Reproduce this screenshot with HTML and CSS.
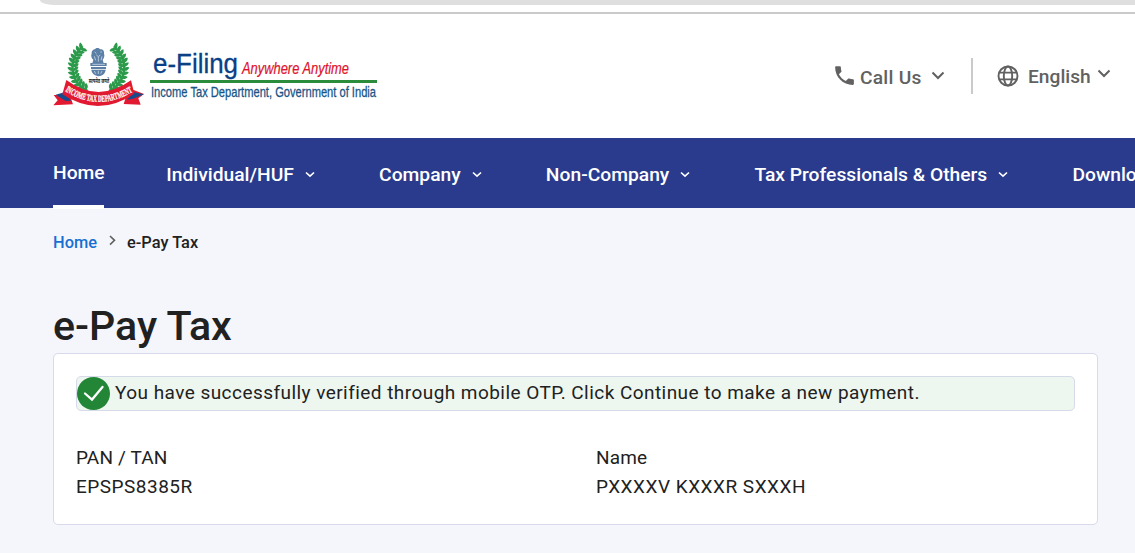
FILE: index.html
```html
<!DOCTYPE html>
<html lang="en">
<head>
    <meta charset="UTF-8">
    <meta name="viewport" content="width=device-width, initial-scale=1.0">
    <title>e-Pay Tax</title>
    <link rel="stylesheet" href="styles.css">
</head>
<body>
    <div class="top-strip"><div class="address-bar"></div></div>

    <header class="header">
        <svg class="logo" width="345" height="80" viewBox="0 0 345 80" role="img" aria-label="e-Filing">
            <defs>
                <g id="leaves">
                    <path d="M160 18c-11-2-13-11-11-18 10 2 13 10 11 18z"/>
                    <path d="M160 14c-11 6-12 12-9 19 10-3 13-11 9-19z"/>
                    <path d="M167 15c-4-7-12-6-17 0 5 7 13 6 17 0z"/>
                </g>
                <g id="branch">
                    <use href="#leaves" transform="rotate(43 160 92)"/>
                    <use href="#leaves" transform="rotate(52 160 92)"/>
                    <use href="#leaves" transform="rotate(61 160 92)"/>
                    <use href="#leaves" transform="rotate(70 160 92)"/>
                    <use href="#leaves" transform="rotate(79 160 92)"/>
                    <use href="#leaves" transform="rotate(88 160 92)"/>
                    <use href="#leaves" transform="rotate(97 160 92)"/>
                    <use href="#leaves" transform="rotate(106 160 92)"/>
                    <use href="#leaves" transform="rotate(115 160 92)"/>
                    <use href="#leaves" transform="rotate(124 160 92)"/>
                    <use href="#leaves" transform="rotate(133 160 92)"/>
                    <use href="#leaves" transform="rotate(142 160 92)"/>
                    <use href="#leaves" transform="rotate(151 160 92)"/>
                </g>
                <path id="ribbon-line" d="M58 167Q160 233 266 169"/>
            </defs>
            <g transform="scale(.33333)">
                <g fill="#2c9a4b" transform="translate(0 5)">
                    <use href="#branch"/>
                    <use href="#branch" transform="translate(320 0) scale(-1 1)"/>
                </g>
                <!-- lion capital -->
                <g fill="#5c7fa6">
                    <path d="M140 56c-1-8 5-13 10-13 2-5 12-6 15 0 8-1 14 5 12 13 3 6 0 13-4 18l3 11h-34l3-11c-6-5-8-12-5-18z"/>
                    <path d="M136 84h49v9h-49zM138 96h45v6h-45z"/>
                    <path d="M139 104h43c-1 11-9 18-21 20-12-2-21-9-22-20z"/>
                </g>
                <g fill="none" stroke="#e4edf5" stroke-width="2">
                    <path d="M149 51l5 4m12-4l5 0M154 60l6 5 6-5M148 64l4 12m8-10v14m11-16l-3 12M142 88h38M148 108l4 8m8-9v10m11-9l-4 8"/>
                </g>
                <text class="motto" x="131" y="144" textLength="62" lengthAdjust="spacingAndGlyphs">सत्यमेव जयते</text>
                <path fill="#e11931" d="M26 180L74 180L84 208L25 211L38 196zM252 160L297 177L280 190L287 209L236 207z"/>
                <path fill="#174b8c" d="M32 179L58 172L78 197L62 198zM246 194L266 172L297 178L264 191z"/>
                <path fill="#e11931" d="M64 135Q160 206 258 136L268 176Q160 249 52 178z"/>
                <text class="ribbon-text"><textPath href="#ribbon-line" startOffset="2" textLength="216" lengthAdjust="spacingAndGlyphs">INCOME TAX DEPARTMENT</textPath></text>
            </g>
            <text class="brand" x="108" y="38" textLength="85" lengthAdjust="spacingAndGlyphs">e-Filing</text>
            <text class="tagline" x="197" y="39" textLength="107" lengthAdjust="spacingAndGlyphs">Anywhere Anytime</text>
            <rect x="105" y="45" width="227" height="3" fill="#2b8d3c"/>
            <text class="department" x="106" y="62" textLength="225" lengthAdjust="spacingAndGlyphs">Income Tax Department, Government of India</text>
        </svg>

        <div class="header-tools">
            <div class="tool call">
                <svg class="phone" width="25" height="25" viewBox="0 0 24 24"><path fill="#616161" d="M6.62 10.79c1.44 2.83 3.76 5.14 6.59 6.59l2.2-2.2c.27-.27.67-.36 1.02-.24 1.12.37 2.33.57 3.57.57.55 0 1 .45 1 1V20c0 .55-.45 1-1 1-9.39 0-17-7.61-17-17 0-.55.45-1 1-1h3.5c.55 0 1 .45 1 1 0 1.25.2 2.45.57 3.57.11.35.03.74-.25 1.02l-2.2 2.2z"/></svg>
                <span>Call Us</span>
                <svg class="chevron" width="14" height="9" viewBox="0 0 14 9"><path d="M1.5 1.5L7 7l5.5-5.5"/></svg>
            </div>
            <div class="tool language">
                <svg class="globe" width="22" height="22" viewBox="0 0 22 22"><g fill="none" stroke="#616161" stroke-width="1.9"><circle cx="11" cy="11" r="9.5"/><ellipse cx="11" cy="11" rx="4.2" ry="9.5"/><path d="M2.2 7.6h17.6M2.2 14.4h17.6"/></g></svg>
                <span>English</span>
                <svg class="chevron" width="14" height="9" viewBox="0 0 14 9"><path d="M1.5 1.5L7 7l5.5-5.5"/></svg>
            </div>
        </div>
    </header>

    <nav class="nav">
        <a class="nav-item active">Home</a>
        <a class="nav-item">Individual/HUF <svg width="10" height="7" viewBox="0 0 10 7"><path d="M1 1.5l4 3.7 4-3.7"/></svg></a>
        <a class="nav-item">Company <svg width="10" height="7" viewBox="0 0 10 7"><path d="M1 1.5l4 3.7 4-3.7"/></svg></a>
        <a class="nav-item">Non-Company <svg width="10" height="7" viewBox="0 0 10 7"><path d="M1 1.5l4 3.7 4-3.7"/></svg></a>
        <a class="nav-item">Tax Professionals &amp; Others <svg width="10" height="7" viewBox="0 0 10 7"><path d="M1 1.5l4 3.7 4-3.7"/></svg></a>
        <a class="nav-item">Downloads</a>
    </nav>

    <main class="content">
        <div class="breadcrumb">
            <a>Home</a>
            <svg width="7" height="11" viewBox="0 0 7 11"><path d="M1 1l4.5 4.3L1 9.6"/></svg>
            <span>e-Pay Tax</span>
        </div>
        <h1>e-Pay Tax</h1>
        <section class="card">
            <div class="alert">
                <svg width="33" height="33" viewBox="0 0 33 33"><circle cx="16.5" cy="16.5" r="16.5" fill="#238636"/><path d="M8 16.5l7 6L25.500 10" fill="none" stroke="#fff" stroke-width="2.3" stroke-linecap="round"/></svg>
                <span>You have successfully verified through mobile OTP. Click Continue to make a new payment.</span>
            </div>
            <div class="details">
                <div>
                    <div class="label">PAN / TAN</div>
                    <div>EPSPS8385R</div>
                </div>
                <div>
                    <div class="label">Name</div>
                    <div>PXXXXV KXXXR SXXXH</div>
                </div>
            </div>
        </section>
    </main>
</body>
</html>
```
FILE: styles.css
```css
* {
    box-sizing: border-box;
}
body {
    margin: 0;
    height: 553px;
    overflow: hidden;
    font-family: Roboto, sans-serif;
    color: #212121;
    background-color: #f5f6fb;
}
.top-strip {
    height: 14px;
    padding-left: 40px;
    background: white;
    border-bottom: 2px solid #cacaca;
}
.address-bar {
    height: 5px;
    background: #dfdfdf;
    border-bottom-left-radius: 14px 5px;
}
.header {
    display: flex;
    justify-content: space-between;
    height: 124px;
    padding: 21px 24px 0 45px;
    background: white;
}
.logo {
    overflow: visible;
}
.brand {
    font: 27px "Liberation Sans", sans-serif;
    fill: #0a4086;
    stroke: #0a4086;
    stroke-width: 0.3px;
}
.tagline {
    font: italic 17px "Liberation Sans", sans-serif;
    fill: #e0112b;
    stroke: #e0112b;
    stroke-width: 0.2px;
}
.department {
    font: 15px "Liberation Sans", sans-serif;
    fill: #185585;
    stroke: #185585;
    stroke-width: 0.3px;
}
.motto {
    font: bold 17px "Noto Sans", sans-serif;
    fill: #222;
}
.ribbon-text {
    font: bold 28px "Liberation Serif", serif;
    fill: white;
    stroke: white;
    stroke-width: 0.8px;
}
.header-tools {
    display: flex;
    height: 36px;
    margin-top: 23px;
    font-size: 19.2px;
    font-weight: 500;
    color: #616161;
}
.tool {
    display: flex;
    align-items: center;
}
.call {
    padding-right: 26px;
    border-right: 2px solid #cacaca;
}
.phone {
    margin: -1px 3px 0 0;
}
.call span {
    width: 61px;
    margin-right: 10px;
    padding-top: 2px;
    letter-spacing: 0.25px;
    white-space: nowrap;
}
.call .chevron {
    margin-top: -1px;
}
.language {
    padding-left: 24px;
}
.language span {
    width: 63px;
    margin: 0 6px 0 9px;
}
.language .chevron {
    margin-top: -5px;
}
.chevron path, .nav-item path, .breadcrumb path {
    fill: none;
    stroke: #616161;
    stroke-width: 2px;
}
.nav {
    display: flex;
    height: 70px;
    padding-left: 53px;
    background: #2a3b8d;
    white-space: nowrap;
}
.nav-item {
    flex: none;
    margin-right: 64px;
    padding-top: 2px;
    font-size: 19.25px;
    font-weight: 500;
    line-height: 70px;
    color: white;
}
.nav-item.active {
    width: 51px;
    height: 71px;
    margin-right: 62.3px;
    padding-top: 0;
    border-bottom: 4px solid white;
}
.nav-item svg {
    margin-left: 6.4px;
    vertical-align: 3px;
}
.nav-item path {
    stroke: white;
    stroke-width: 1.6px;
}
.content {
    padding: 23px 37px 0 53px;
}
.breadcrumb {
    display: flex;
    align-items: center;
    height: 22px;
    font-size: 16.4px;
    font-weight: 500;
}
.breadcrumb a {
    color: #176fd1;
}
.breadcrumb svg {
    margin: -3px 11px 0 12px;
}
.breadcrumb path {
    stroke-width: 1.6px;
}
h1 {
    margin: 48px 0 0;
    font-size: 41.2px;
    font-weight: 500;
    line-height: 50px;
    height: 52px;
}
.card {
    height: 172px;
    padding: 22px;
    background: white;
    border: 1px solid #d9daea;
    border-radius: 5px;
}
.alert {
    display: flex;
    align-items: center;
    height: 35px;
    background: #edf6ef;
    border: 1px solid #d6dae9;
    border-radius: 5px;
}
.alert svg {
    margin-right: 5px;
}
.alert span {
    letter-spacing: 0.45px;
    font-size: 19px;
    line-height: 32px;
    height: 33px;
}
.details {
    display: grid;
    grid-template-columns: 520px 1fr;
    margin-top: 32px;
    font-size: 19px;
    line-height: 29px;
    letter-spacing: 0.5px;
}
.label {
    letter-spacing: 0.15px;
}
```
